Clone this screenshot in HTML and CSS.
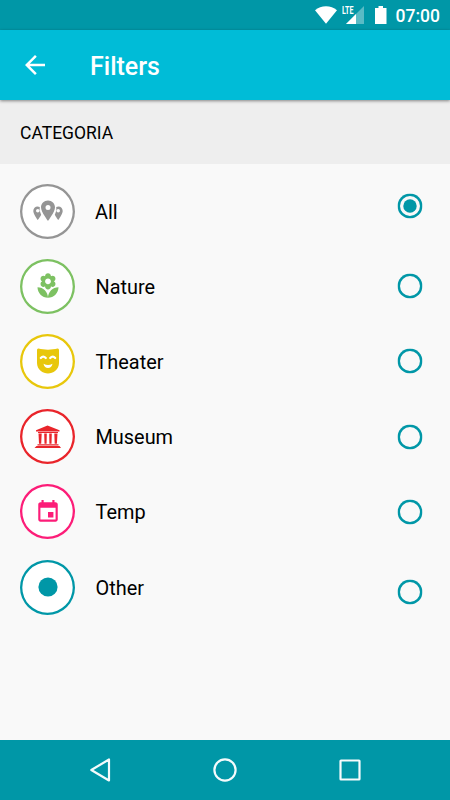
FILE: index.html
```html
<!DOCTYPE html>
<html lang="en">
<head>
    <meta charset="UTF-8">
    <meta name="viewport" content="width=device-width, initial-scale=1.0">
    <title>Filters</title>
    <link rel="stylesheet" href="styles.css">
</head>
<body>
    <div class="status-bar">
        <svg class="wifi" width="22" height="18" viewBox="0 0 22 18"><path d="M0 4.2C6-1.2 16-1.2 22 4.2L11 17.8z" fill="#fff"/></svg>
        <div class="signal">
            <span class="lte">LTE</span>
            <svg width="18" height="18" viewBox="0 0 18 18">
                <path d="M18 0V18H0z" fill="#fff" fill-opacity="0.35"/>
                <path d="M10 8V18H0z" fill="#fff"/>
            </svg>
        </div>
        <svg class="battery" width="12" height="18" viewBox="0 0 12 18"><path d="M3.500 0h4.500v2H11.500v16H0V2h3.500z" fill="#fff"/></svg>
        <span class="clock">07:00</span>
    </div>

    <header class="toolbar">
        <svg class="back" width="30" height="30" viewBox="0 0 24 24"><path d="M20 11H7.830l5.590-5.590L12 4l-8 8 8 8 1.410-1.410L7.830 13H20z" fill="#fff"/></svg>
        <h1>Filters</h1>
    </header>

    <h2 class="section-title">CATEGORIA</h2>

    <main class="filter-list">
        <div class="filter all">
            <span class="badge">
                <svg width="32" height="24" viewBox="0 0 32 24" fill="currentColor" fill-rule="evenodd">
                    <path d="M16 1.500c-4 0-7 3-7 6.800C9 13 16 22 16 22s7-9 7-13.700c0-3.800-3-6.800-7-6.800zm0 4.500a2.500 2.500 0 1 1 0 5 2.500 2.500 0 0 1 0-5z"/>
                    <path d="M7.800 8C4.500 6.300 1.300 8.600 1.300 11.900 1.300 15.200 5.800 21 5.800 21s2-2.600 3.400-5.300C8 13.200 7.400 10.600 7.800 8zM5.800 10a1.800 1.800 0 1 1 0 3.600 1.800 1.800 0 0 1 0-3.600z"/>
                    <path d="M24.200 8c3.300-1.700 6.500.6 6.500 3.900 0 3.300-4.500 9.100-4.500 9.100s-2-2.600-3.400-5.300C24 13.200 24.600 10.600 24.200 8zM26.200 10a1.800 1.800 0 1 0 0 3.600 1.800 1.800 0 0 0 0-3.600z"/>
                </svg>
            </span>
            <span class="label">All</span>
            <span class="radio checked"></span>
        </div>
        <div class="filter nature">
            <span class="badge">
                <svg width="28" height="28" viewBox="0 0 24 24" fill="currentColor"><path d="M12 22c4.970 0 9-4.030 9-9-4.970 0-9 4.030-9 9zM5.600 10.250c0 1.380 1.120 2.500 2.500 2.500.53 0 1.010-.16 1.420-.44l-.02.19c0 1.380 1.120 2.500 2.500 2.500s2.500-1.120 2.500-2.500l-.02-.19c.4.28.89.44 1.420.44 1.380 0 2.500-1.120 2.500-2.500 0-1-.59-1.850-1.430-2.250.84-.4 1.430-1.250 1.430-2.250 0-1.380-1.120-2.500-2.500-2.500-.53 0-1.010.16-1.420.44l.02-.19C14.500 2.120 13.380 1 12 1S9.500 2.120 9.500 3.500l.02.19c-.4-.28-.89-.44-1.420-.44-1.380 0-2.500 1.120-2.500 2.500 0 1 .59 1.850 1.430 2.250-.84.4-1.430 1.250-1.430 2.250zM12 5.500c1.380 0 2.500 1.120 2.500 2.500s-1.120 2.500-2.500 2.500S9.500 9.380 9.500 8s1.120-2.500 2.500-2.500zM3 13c0 4.970 4.030 9 9 9 0-4.970-4.030-9-9-9z"/></svg>
            </span>
            <span class="label">Nature</span>
            <span class="radio"></span>
        </div>
        <div class="filter theater">
            <span class="badge">
                <svg width="22" height="26" viewBox="0 0 22 26">
                    <path d="M1.500 0.500C7 2 15 2 20.500 0.500Q22 0.300 22 2V15C22 21.500 16 25.500 11 25.500S0 21.500 0 15V2Q0 0.300 1.500 0.500z" fill="currentColor"/>
                    <path d="M3.800 10Q6.200 7.200 8.800 10M13.200 10Q15.800 7.200 18.200 10" fill="none" stroke="#fff" stroke-width="2.200" stroke-linecap="round"/>
                    <path d="M6.500 15.700Q11 18.400 15.500 15.700Q14.500 20 11 20T6.500 15.700z" fill="#fff"/>
                </svg>
            </span>
            <span class="label">Theater</span>
            <span class="radio"></span>
        </div>
        <div class="filter museum">
            <span class="badge">
                <svg width="28" height="24" viewBox="0 0 28 24" fill="currentColor"><path d="M13.500 0.500L25.500 5.200V6.500H2V5.200zM4 7h20v1H4zM4.500 8.500h3.200l-.5 10.300H5zM10.200 8.500h2.600l-.2 10.300h-2.100zM15.200 8.500h2.600l-.3 10.300h-2.100zM20.300 8.500h3.200l-.6 10.300h-2.200zM3.500 19.300h21v1.200h-21zM2.500 21h23l1.500 2H0.500z"/></svg>
            </span>
            <span class="label">Museum</span>
            <span class="radio"></span>
        </div>
        <div class="filter temp">
            <span class="badge">
                <svg width="26" height="26" viewBox="0 0 24 24" fill="currentColor"><path d="M17 12h-5v5h5v-5zM16 1v2H8V1H6v2H5c-1.110 0-1.990.9-1.990 2L3 19c0 1.100.89 2 2 2h14c1.100 0 2-.9 2-2V5c0-1.100-.9-2-2-2h-1V1h-2zm3 18H5V8h14v11z"/></svg>
            </span>
            <span class="label">Temp</span>
            <span class="radio"></span>
        </div>
        <div class="filter other">
            <span class="badge">
                <svg width="20" height="20" viewBox="0 0 20 20"><circle cx="10" cy="10" r="9.600" fill="currentColor"/></svg>
            </span>
            <span class="label">Other</span>
            <span class="radio"></span>
        </div>
    </main>

    <nav class="nav-bar">
        <svg width="26" height="26" viewBox="0 0 26 26"><path d="M22 2.500V23.500L4.300 13z"/></svg>
        <svg width="26" height="26" viewBox="0 0 26 26"><circle cx="13" cy="13" r="10.600"/></svg>
        <svg width="26" height="26" viewBox="0 0 26 26"><rect x="3.500" y="3.500" width="19" height="19" rx="0.500"/></svg>
    </nav>
</body>
</html>
```

FILE: styles.css
```css
* {
    box-sizing: border-box;
}

body {
    font-family: Roboto, "Liberation Sans", sans-serif;
    background-color: #f9f9f9;
    margin: 0;
    height: 100vh;
    display: flex;
    flex-direction: column;
    color: #000;
}

svg {
    display: block;
    flex: none;
}

.status-bar {
    height: 30px;
    background-color: #0097a7;
    color: #fff;
    display: flex;
    align-items: center;
    justify-content: flex-end;
    padding-right: 10px;
}

.signal {
    position: relative;
    margin-left: 9px;
}

.lte {
    position: absolute;
    left: -4px;
    top: -1px;
    font-size: 11.5px;
    line-height: 11px;
    font-weight: 700;
    transform: scaleX(0.62);
    transform-origin: left;
}

.battery {
    margin-left: 11px;
}

.clock {
    margin-left: 9px;
    padding-top: 2px;
    font-size: 17.5px;
    font-weight: 500;
    line-height: 28px;
}

.toolbar {
    height: 70px;
    background-color: #00bcd7;
    color: #fff;
    display: flex;
    align-items: center;
    padding-left: 20px;
    box-shadow: 0 1px 3px rgba(0, 0, 0, 0.45);
    z-index: 1;
}

h1 {
    margin: 3px 0 0 40px;
    font-size: 25px;
    font-weight: 500;
}

.section-title {
    margin: 0;
    height: 64px;
    line-height: 66px;
    padding-left: 20px;
    background-color: #eee;
    font-size: 17.5px;
    font-weight: 400;
}

.filter-list {
    flex: 1;
    padding: 9.5px 27px 0 20px;
}

.filter {
    height: 75.2px;
    display: flex;
    align-items: center;
}

.badge {
    width: 55px;
    height: 55px;
    border-radius: 50%;
    background-color: #fff;
    box-shadow: inset 0 0 0 2.3px currentColor;
    display: flex;
    align-items: center;
    justify-content: center;
}

.label {
    flex: 1;
    margin: 2px 0 0 20.5px;
    font-size: 19.9px;
    color: #000;
}

.radio {
    width: 26px;
    height: 26px;
    border-radius: 50%;
    box-shadow: inset 0 0 0 2.6px #0097a7;
    display: flex;
    align-items: center;
    justify-content: center;
    transform: scale(0.96);
}

.radio.checked::after {
    content: "";
    width: 14px;
    height: 14px;
    border-radius: 50%;
    background-color: #0097a7;
}

.all .badge {
    color: #959595;
}

.all .label {
    margin-left: 20px;
}

.all .radio {
    margin-bottom: 11px;
}

.nature .badge {
    color: #7dc162;
}

.theater .badge {
    color: #e8c70c;
}

.museum .badge {
    color: #e9252b;
}

.temp .badge {
    color: #fc1d78;
}

.other .badge {
    color: #0097a7;
}

.other .radio {
    margin-top: 9px;
}

.nav-bar {
    height: 60px;
    background-color: #0097a7;
    display: flex;
    align-items: center;
    justify-content: space-between;
    padding: 0 87px;
}

.nav-bar svg {
    fill: none;
    stroke: #f4fbfc;
    stroke-width: 2.2;
    stroke-linejoin: round;
}
```
